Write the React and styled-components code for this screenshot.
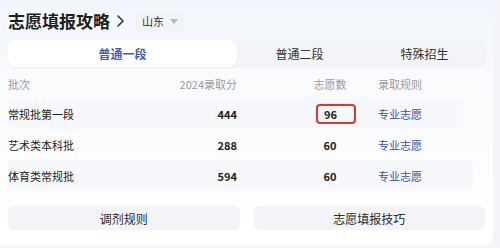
import React from "react";
import styled, { createGlobalStyle } from "styled-components";

const Global = createGlobalStyle`
  html, body { margin: 0; padding: 0; background: #f3f5f8; }
  body { font-family: "Noto Sans CJK SC", "Noto Sans", sans-serif; width: 500px; height: 248px; overflow: hidden; }
`;

const Card = styled.div`
  width: 493px;
  height: 246px;
  box-sizing: border-box;
  padding: 8px 8px 0 8px;
  background: linear-gradient(180deg, #f2f6fc 0%, #fafbfd 35%, #ffffff 100%);
  border-radius: 0 0 12px 0;
  display: flex;
  flex-direction: column;
`;

const Header = styled.div`
  display: flex;
  align-items: center;
  height: 26px;
`;

const Title = styled.h1`
  margin: 0;
  font-size: 17px;
  font-weight: 700;
  color: #1e1e1e;
  line-height: 26px;
`;

const Chevron = styled.svg`
  margin-left: 6px;
  width: 9px;
  height: 14px;
`;

const Region = styled.div`
  margin-left: 11px;
  height: 20px;
  padding: 0 7px 0 6px;
  background: #f1f3f6;
  border-radius: 4px;
  display: flex;
  align-items: center;
  gap: 6px;
  font-size: 11px;
  color: #333;
`;

const Caret = styled.span`
  width: 0;
  height: 0;
  border-left: 4.5px solid transparent;
  border-right: 4.5px solid transparent;
  border-top: 5px solid #b5b8bd;
`;

const Tabs = styled.div`
  margin-top: 6px;
  width: 479px;
  height: 27px;
  background: #f2f4f7;
  border-radius: 8px;
  display: flex;
`;

const Tab = styled.div`
  flex: ${(p) => (p.$active ? "0 0 229px" : "1 1 0")};
  display: flex;
  align-items: center;
  justify-content: center;
  font-size: 12px;
  border-radius: 8px;
  color: ${(p) => (p.$active ? "#4a59b0" : "#333")};
  font-weight: ${(p) => (p.$active ? 700 : 400)};
  background: ${(p) => (p.$active ? "#ffffff" : "transparent")};
  box-shadow: ${(p) => (p.$active ? "0 1px 3px rgba(0,0,0,0.05)" : "none")};
`;

const Table = styled.div`
  margin-top: 3px;
  display: flex;
  flex-direction: column;
`;

const Row = styled.div`
  display: flex;
  align-items: center;
  height: ${(p) => (p.$head ? "28px" : "31px")};
  width: ${(p) => (p.$wide ? "465px" : "455px")};
  background: ${(p) => (p.$striped ? "#f7f8fb" : "transparent")};
  border-radius: 4px;
  font-size: 11px;
  color: ${(p) => (p.$head ? "#9a9a9a" : "#222")};
`;

const Name = styled.div`
  width: 150px;
`;

const Score = styled.div`
  width: 79px;
  text-align: right;
  font-weight: ${(p) => (p.$head ? 400 : 700)};
`;

const Count = styled.div`
  margin-left: 53px;
  width: 80px;
  display: flex;
  justify-content: center;
  font-weight: ${(p) => (p.$head ? 400 : 700)};
`;

const Highlight = styled.span`
  display: inline-flex;
  align-items: center;
  box-sizing: border-box;
  height: 20px;
  padding: 0 17px 0 6px;
  margin-left: 12px;
  border: 2px solid #d23b31;
  border-radius: 4px;
`;

const Rule = styled.div`
  margin-left: 8px;
  color: ${(p) => (p.$head ? "#9a9a9a" : "#3d4fa3")};
`;

const Buttons = styled.div`
  margin-top: 15px;
  display: flex;
  gap: 14px;
`;

const Button = styled.div`
  width: 232px;
  height: 24px;
  border-radius: 6px;
  background: #f2f4f7;
  display: flex;
  align-items: center;
  justify-content: center;
  font-size: 12px;
  color: #2a2a2a;
`;

const rows = [
  { name: "常规批第一段", score: "444", count: "96", hl: true, striped: true },
  { name: "艺术类本科批", score: "288", count: "60" },
  { name: "体育类常规批", score: "594", count: "60", striped: true, wide: true },
];

export default function App() {
  return (
    <>
      <Global />
      <Card>
        <Header>
          <Title>志愿填报攻略</Title>
          <Chevron viewBox="0 0 9 14">
            <path d="M2 2 L7 7 L2 12" fill="none" stroke="#333" strokeWidth="1.6" strokeLinecap="round" strokeLinejoin="round" />
          </Chevron>
          <Region>
            山东
            <Caret />
          </Region>
        </Header>
        <Tabs>
          <Tab $active>普通一段</Tab>
          <Tab>普通二段</Tab>
          <Tab>特殊招生</Tab>
        </Tabs>
        <Table>
          <Row $head>
            <Name>批次</Name>
            <Score $head>2024录取分</Score>
            <Count $head>志愿数</Count>
            <Rule $head>录取规则</Rule>
          </Row>
          {rows.map((r) => (
            <Row key={r.name} $striped={r.striped} $wide={r.wide}>
              <Name>{r.name}</Name>
              <Score>{r.score}</Score>
              <Count>{r.hl ? <Highlight>{r.count}</Highlight> : r.count}</Count>
              <Rule>专业志愿</Rule>
            </Row>
          ))}
        </Table>
        <Buttons>
          <Button>调剂规则</Button>
          <Button>志愿填报技巧</Button>
        </Buttons>
      </Card>
    </>
  );
}
